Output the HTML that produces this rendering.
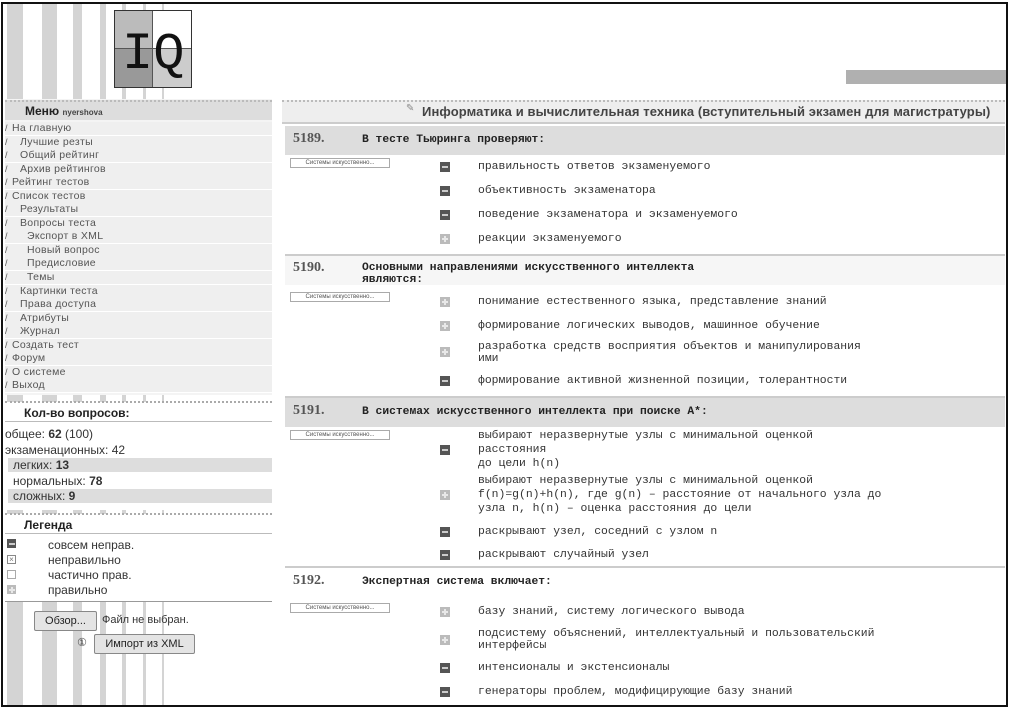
<!DOCTYPE html>
<html><head><meta charset="utf-8">
<style>
*{margin:0;padding:0;box-sizing:border-box}
body{width:1011px;height:711px;background:#fff;position:relative;overflow:hidden;font-family:"Liberation Sans","DejaVu Sans",sans-serif;color:#333}
.frame{position:absolute;left:1px;top:2px;width:1007px;height:705px;border:2px solid #111}
.a{position:absolute}
.stripe{position:absolute;top:4px;height:703px;background:#d4d4d4}
.panel{position:absolute;background:#fff}
.hdr{position:absolute;background:#ddd;border-top:2px dotted #bbb}
.mi{position:absolute;left:5px;width:267px;height:13.5px;font-size:10.5px;line-height:13px;color:#555;border-bottom:1px solid #fff;background:#efefef;padding-left:7px;letter-spacing:0.3px}
.mi:before{content:"/";position:absolute;left:0px;font-size:9px;color:#555}
.l1{padding-left:15px}.l2{padding-left:22px}
.mono{font-family:"Liberation Mono","DejaVu Sans Mono",monospace}
.qh{position:absolute;left:285px;width:720px;height:29px}
.num{position:absolute;left:8px;top:5px;font-family:"Liberation Serif",serif;font-weight:bold;font-size:14px;color:#555}
.qt{position:absolute;left:77px;top:8px;font-family:"Liberation Mono",monospace;font-weight:bold;font-size:11.3px;line-height:12px;color:#222}
.btn{position:absolute;left:290px;width:100px;height:10px;border:1px solid #aaa;background:#fff;font-size:6px;line-height:8px;text-align:center;color:#555}
.ic{position:absolute;left:440px;width:10px;height:10px}
.m{background:#555}
.m:after{content:"";position:absolute;left:2px;top:4px;width:6px;height:2px;background:#ccc}
.p{background:#bbb}
.p:after{content:"";position:absolute;left:2px;top:4px;width:6px;height:2px;background:#e8e8e8}
.p:before{content:"";position:absolute;left:4px;top:2px;width:2px;height:6px;background:#e8e8e8}
.ans{position:absolute;left:478px;font-family:"Liberation Mono",monospace;font-size:11.4px;line-height:14px;color:#333}
.sep{position:absolute;left:285px;width:720px;height:2px;background:#ccc}
</style></head><body>
<div class="stripe" style="left:7px;width:16px"></div>
<div class="stripe" style="left:42px;width:15px"></div>
<div class="stripe" style="left:73px;width:9px"></div>
<div class="stripe" style="left:100px;width:6px"></div>
<div class="stripe" style="left:122px;width:4px"></div>
<div class="stripe" style="left:143px;width:3px"></div>
<div class="stripe" style="left:162px;width:2px"></div>

<!-- logo -->
<div class="a" style="left:114px;top:10px;width:78px;height:78px;background:#fff;overflow:hidden">
<div class="a" style="left:0;top:0;width:39px;height:39px;background:#bbb"></div>
<div class="a" style="left:39px;top:0;width:39px;height:39px;background:#fff"></div>
<div class="a" style="left:0;top:39px;width:39px;height:39px;background:#999"></div>
<div class="a" style="left:39px;top:39px;width:39px;height:39px;background:#ccc"></div>
<div class="a" style="left:0;top:38px;width:78px;height:1px;background:#555"></div>
<div class="a" style="left:38px;top:0;width:1px;height:78px;background:#555"></div>
<div class="a mono" style="left:8px;top:20px;font-size:52px;line-height:50px;color:#111;letter-spacing:0px">IQ</div>
<div class="a" style="left:0;top:0;width:78px;height:78px;border:1px solid #333"></div>
</div>
<div class="a" style="left:846px;top:70px;width:162px;height:14px;background:#b0b0b0"></div>

<!-- left menu -->
<div class="panel" style="left:5px;top:99px;width:267px;height:296px;background:#f4f4f4"></div>
<div class="hdr" style="left:5px;top:100px;width:267px;height:20px"></div>
<div class="a" style="left:25px;top:104px;font-size:12px;font-weight:bold;color:#222">Меню <span style="font-size:8px;color:#444">nyershova</span></div>
<div class="mi" style="top:122px">На главную</div>
<div class="mi l1" style="top:136px">Лучшие резты</div>
<div class="mi l1" style="top:149px">Общий рейтинг</div>
<div class="mi l1" style="top:163px">Архив рейтингов</div>
<div class="mi" style="top:176px">Рейтинг тестов</div>
<div class="mi" style="top:190px">Список тестов</div>
<div class="mi l1" style="top:203px">Результаты</div>
<div class="mi l1" style="top:217px">Вопросы теста</div>
<div class="mi l2" style="top:230px">Экспорт в XML</div>
<div class="mi l2" style="top:244px">Новый вопрос</div>
<div class="mi l2" style="top:257px">Предисловие</div>
<div class="mi l2" style="top:271px">Темы</div>
<div class="mi l1" style="top:285px">Картинки теста</div>
<div class="mi l1" style="top:298px">Права доступа</div>
<div class="mi l1" style="top:312px">Атрибуты</div>
<div class="mi l1" style="top:325px">Журнал</div>
<div class="mi" style="top:339px">Создать тест</div>
<div class="mi" style="top:352px">Форум</div>
<div class="mi" style="top:366px">О системе</div>
<div class="mi" style="top:379px">Выход</div>

<!-- count -->
<div class="panel" style="left:5px;top:402px;width:267px;height:108px"></div>
<div class="a" style="left:5px;top:401px;width:267px;height:2px;border-top:2px dotted #aaa"></div>
<div class="a" style="left:24px;top:406px;font-size:12px;font-weight:bold;color:#222">Кол-во вопросов:</div>
<div class="a" style="left:5px;top:421px;width:267px;height:1px;background:#bbb"></div>
<div class="a" style="left:5px;top:426px;font-size:12px;line-height:16px;color:#333">общее: <b>62</b> (100)<br>экзаменационных: 42</div>
<div class="a" style="left:8px;top:458px;width:264px;height:14px;background:#ddd"></div>
<div class="a" style="left:8px;top:489px;width:264px;height:14px;background:#ddd"></div>
<div class="a" style="left:13px;top:458px;font-size:12px;line-height:15.5px;color:#333">легких: <b>13</b><br>нормальных: <b>78</b><br>сложных: <b>9</b></div>

<!-- legend -->
<div class="panel" style="left:5px;top:514px;width:267px;height:88px"></div>
<div class="a" style="left:5px;top:513px;width:267px;height:2px;border-top:2px dotted #aaa"></div>
<div class="a" style="left:24px;top:518px;font-size:12px;font-weight:bold;color:#222">Легенда</div>
<div class="a" style="left:5px;top:533px;width:267px;height:1px;background:#bbb"></div>
<div class="a m" style="left:7px;top:539px;width:9px;height:9px"></div>
<div class="a" style="left:7px;top:555px;width:9px;height:9px;border:1px solid #888;font-size:8px;line-height:7px;text-align:center;color:#777">×</div>
<div class="a" style="left:7px;top:570px;width:9px;height:9px;border:1px solid #aaa"></div>
<div class="a p" style="left:7px;top:585px;width:9px;height:9px"></div>
<div class="a" style="left:48px;top:538px;font-size:12px;line-height:15px;color:#333">совсем неправ.<br>неправильно<br>частично прав.<br>правильно</div>
<div class="a" style="left:5px;top:601px;width:267px;height:1px;background:#999"></div>

<div class="a" style="left:34px;top:611px;width:63px;height:20px;border:1px solid #888;border-radius:2px;background:#e4e4e4;font-size:11px;line-height:18px;text-align:center;color:#222">Обзор...</div>
<div class="a" style="left:102px;top:614px;font-size:11px;color:#333">Файл не выбран.</div>
<div class="a" style="left:77px;top:636px;font-size:11px;color:#333">①</div>
<div class="a" style="left:94px;top:634px;width:101px;height:20px;border:1px solid #888;border-radius:2px;background:#e4e4e4;font-size:11px;line-height:18px;text-align:center;color:#222">Импорт из XML</div>

<!-- right -->
<div class="panel" style="left:282px;top:99px;width:723px;height:606px"></div>
<div class="hdr" style="left:282px;top:100px;width:723px;height:22px;background:#eee"></div>
<div class="a" style="left:282px;top:122px;width:723px;height:2px;background:#ccc"></div>
<div class="a" style="left:406px;top:103px;font-size:10px;color:#888">✎</div>
<div class="a" style="left:422px;top:104px;font-size:13px;font-weight:bold;color:#444;letter-spacing:0.1px">Информатика и вычислительная техника (вступительный экзамен для магистратуры)</div>

<div class="qh" style="top:126px;background:#ddd"><div class="num">5189.</div><div class="qt">В тесте Тьюринга проверяют:</div></div>
<div class="btn" style="top:158px">Системы искусственно...</div>
<div class="ic m" style="top:162px"></div><div class="ans" style="top:160px">правильность ответов экзаменуемого</div>
<div class="ic m" style="top:186px"></div><div class="ans" style="top:184px">объективность экзаменатора</div>
<div class="ic m" style="top:210px"></div><div class="ans" style="top:208px">поведение экзаменатора и экзаменуемого</div>
<div class="ic p" style="top:234px"></div><div class="ans" style="top:232px">реакции экзаменуемого</div>
<div class="sep" style="top:254px"></div>

<div class="qh" style="top:256px;background:#f6f6f6"><div class="num" style="top:4px">5190.</div><div class="qt" style="top:6px">Основными направлениями искусственного интеллекта<br>являются:</div></div>
<div class="btn" style="top:292px">Системы искусственно...</div>
<div class="ic p" style="top:297px"></div><div class="ans" style="top:295px">понимание естественного языка, представление знаний</div>
<div class="ic p" style="top:321px"></div><div class="ans" style="top:319px">формирование логических выводов, машинное обучение</div>
<div class="ic p" style="top:347px"></div><div class="ans" style="top:341px;line-height:12px">разработка средств восприятия объектов и манипулирования<br>ими</div>
<div class="ic m" style="top:376px"></div><div class="ans" style="top:374px">формирование активной жизненной позиции, толерантности</div>
<div class="sep" style="top:396px"></div>

<div class="qh" style="top:398px;background:#ddd"><div class="num">5191.</div><div class="qt">В системах искусственного интеллекта при поиске А*:</div></div>
<div class="btn" style="top:430px">Системы искусственно...</div>
<div class="ic m" style="top:445px"></div><div class="ans" style="top:429px">выбирают неразвернутые узлы с минимальной оценкой<br>расстояния<br>до цели h(n)</div>
<div class="ic p" style="top:490px"></div><div class="ans" style="top:474px">выбирают неразвернутые узлы с минимальной оценкой<br>f(n)=g(n)+h(n), где g(n) – расстояние от начального узла до<br>узла n, h(n) – оценка расстояния до цели</div>
<div class="ic m" style="top:527px"></div><div class="ans" style="top:525px">раскрывают узел, соседний с узлом n</div>
<div class="ic m" style="top:550px"></div><div class="ans" style="top:548px">раскрывают случайный узел</div>
<div class="sep" style="top:566px"></div>

<div class="qh" style="top:568px;background:#fff"><div class="num">5192.</div><div class="qt">Экспертная система включает:</div></div>
<div class="btn" style="top:603px">Системы искусственно...</div>
<div class="ic p" style="top:607px"></div><div class="ans" style="top:605px">базу знаний, систему логического вывода</div>
<div class="ic p" style="top:635px"></div><div class="ans" style="top:628px;line-height:12px">подсистему объяснений, интеллектуальный и пользовательский<br>интерфейсы</div>
<div class="ic m" style="top:663px"></div><div class="ans" style="top:661px">интенсионалы и экстенсионалы</div>
<div class="ic m" style="top:687px"></div><div class="ans" style="top:685px">генераторы проблем, модифицирующие базу знаний</div>

<div class="frame"></div>
</body></html>
